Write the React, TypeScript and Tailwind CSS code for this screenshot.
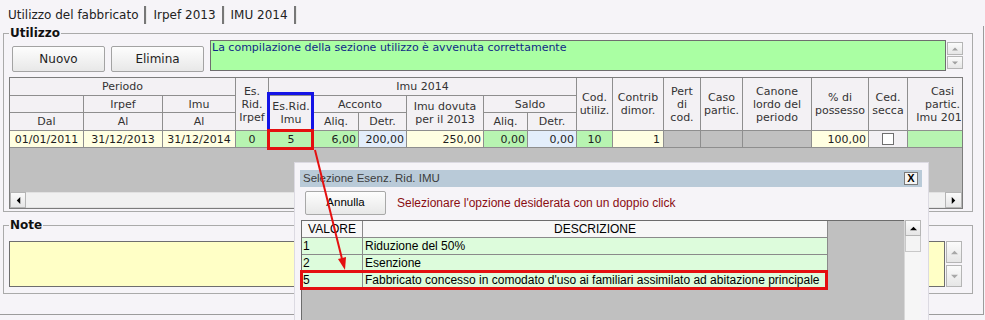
import type { ReactNode } from 'react'

const line = 'border-r border-b border-[#8e8e8e]'

function Th({ c, children }: { c: string; children?: ReactNode }) {
  return (
    <div className={`flex items-center justify-center text-center leading-[13px] bg-[#f3f1f4] text-[#333] ${line} ${c}`}>
      <span>{children}</span>
    </div>
  )
}

function Td({ c, children }: { c: string; children?: ReactNode }) {
  return <div className={`flex items-center leading-none text-[#1e1e1e] ${line} ${c}`}>{children}</div>
}

function Tri({ dir, color = '#000', size = 7 }: { dir: 'up' | 'down' | 'left' | 'right'; color?: string; size?: number }) {
  const pts = {
    up: '0,6 4,2 8,6',
    down: '0,2 4,6 8,2',
    left: '6,0 2,4 6,8',
    right: '2,0 6,4 2,8',
  }[dir]
  return (
    <svg width={size} height={size} viewBox="0 0 8 8">
      <polygon points={pts} fill={color} />
    </svg>
  )
}

function SmallBtn({ c, children }: { c: string; children: ReactNode }) {
  return (
    <div className={`flex items-center justify-center bg-linear-to-b from-[#fbfbfb] to-[#e6e6e6] border border-[#b5b5b5] ${c}`}>
      {children}
    </div>
  )
}

function Tabs() {
  const sep = <span className="mx-[6px] h-[18px] w-[3px] border-l-2 border-l-[#777] border-r border-r-[#e9e9e9]" />
  return (
    <div className="h-[24px] flex items-center pl-[8px] pt-[6px] text-[12px] text-[#222]">
      <span>Utilizzo del fabbricato</span>
      {sep}
      <span>Irpef 2013</span>
      {sep}
      <span>IMU 2014</span>
      {sep}
    </div>
  )
}

function UsageGrid() {
  return (
    <div className="mt-[5px] w-[954px] h-[132px] border border-[#7c7c7c] bg-[#c0c0c0] flex flex-col overflow-hidden text-[11px]">
      <div className="grid grid-cols-[74px_79px_73px_33px_45px_45px_48px_77px_44px_49px_36px_51px_37px_42px_69px_57px_39px_70px] grid-rows-[18px_17px_18px_17px]">
        <Th c="col-start-1 col-span-3 row-start-1">Periodo</Th>
        <Th c="col-start-1 row-start-2" />
        <Th c="col-start-2 row-start-2">Irpef</Th>
        <Th c="col-start-3 row-start-2">Imu</Th>
        <Th c="col-start-1 row-start-3">Dal</Th>
        <Th c="col-start-2 row-start-3">Al</Th>
        <Th c="col-start-3 row-start-3">Al</Th>
        <Th c="col-start-4 row-start-1 row-span-3">Es.<br />Rid.<br />Irpef</Th>
        <Th c="col-start-5 col-span-6 row-start-1">Imu 2014</Th>
        <Th c="col-start-5 row-start-2 row-span-2">Es.Rid.<br />Imu</Th>
        <Th c="col-start-6 col-span-2 row-start-2">Acconto</Th>
        <Th c="col-start-6 row-start-3">Aliq.</Th>
        <Th c="col-start-7 row-start-3">Detr.</Th>
        <Th c="col-start-8 row-start-2 row-span-2">Imu dovuta<br />per il 2013</Th>
        <Th c="col-start-9 col-span-2 row-start-2">Saldo</Th>
        <Th c="col-start-9 row-start-3">Aliq.</Th>
        <Th c="col-start-10 row-start-3">Detr.</Th>
        <Th c="col-start-11 row-start-1 row-span-3">Cod.<br />utiliz.</Th>
        <Th c="col-start-12 row-start-1 row-span-3">Contrib<br />dimor.</Th>
        <Th c="col-start-13 row-start-1 row-span-3">Pert<br />di<br />cod.</Th>
        <Th c="col-start-14 row-start-1 row-span-3">Caso<br />partic.</Th>
        <Th c="col-start-15 row-start-1 row-span-3">Canone<br />lordo del<br />periodo</Th>
        <Th c="col-start-16 row-start-1 row-span-3">% di<br />possesso</Th>
        <Th c="col-start-17 row-start-1 row-span-3">Ced.<br />secca</Th>
        <Th c="col-start-18 row-start-1 row-span-3">Casi<br />partic.<br />Imu 2013</Th>

        <Td c="col-start-1 row-start-4 bg-[#ffffe2] justify-center">01/01/2011</Td>
        <Td c="col-start-2 row-start-4 bg-[#ffffe2] justify-center">31/12/2013</Td>
        <Td c="col-start-3 row-start-4 bg-[#ffffe2] justify-center">31/12/2014</Td>
        <Td c="col-start-4 row-start-4 bg-[#b7f4b1] justify-center">0</Td>
        <Td c="col-start-5 row-start-4 bg-[#b7f4b1] justify-center">5</Td>
        <Td c="col-start-6 row-start-4 bg-[#b7f4b1] justify-end pr-[2px]">6,00</Td>
        <Td c="col-start-7 row-start-4 bg-[#e3eefb] justify-end pr-[2px]">200,00</Td>
        <Td c="col-start-8 row-start-4 bg-[#ffffe2] justify-end pr-[2px]">250,00</Td>
        <Td c="col-start-9 row-start-4 bg-[#b7f4b1] justify-end pr-[2px]">0,00</Td>
        <Td c="col-start-10 row-start-4 bg-[#e3eefb] justify-end pr-[2px]">0,00</Td>
        <Td c="col-start-11 row-start-4 bg-[#b7f4b1] justify-center">10</Td>
        <Td c="col-start-12 row-start-4 bg-[#ffffe2] justify-end pr-[3px]">1</Td>
        <Td c="col-start-13 row-start-4 bg-[#c0c0c0]" />
        <Td c="col-start-14 row-start-4 bg-[#c0c0c0]" />
        <Td c="col-start-15 row-start-4 bg-[#c0c0c0]" />
        <Td c="col-start-16 row-start-4 bg-[#ffffe2] justify-end pr-[2px]">100,00</Td>
        <Td c="col-start-17 row-start-4 bg-[#f2f0f3] justify-center">
          <span className="w-[12px] h-[12px] border border-[#6f6f6f] bg-white" />
        </Td>
        <Td c="col-start-18 row-start-4 bg-[#b7f4b1]" />
      </div>
      <div className="flex-1" />
      <div className="h-[16px] flex bg-[#f1f1f1]">
        <SmallBtn c="w-[16px] h-[16px]"><Tri dir="left" /></SmallBtn>
        <div className="flex-1 border-y border-[#e2e2e2]" />
        <SmallBtn c="w-[17px] h-[16px]"><Tri dir="right" /></SmallBtn>
      </div>
    </div>
  )
}

function Dialog() {
  const rows = [
    ['1', 'Riduzione del 50%'],
    ['2', 'Esenzione'],
    ['5', "Fabbricato concesso in comodato d'uso ai familiari assimilato ad abitazione principale"],
  ]
  return (
    <div className="absolute left-[294px] top-[162px] w-[635px] h-[170px] bg-[#f6f4f8] border border-[#dcdae2] pl-[5px] pt-[7px] font-['Liberation_Sans',sans-serif]">
      <div className="w-[622px] h-[17px] bg-[#b9cad8] flex items-center justify-between pl-[3px] pr-[4px]">
        <span className="text-[11.5px] text-[#3c3c3c]">Selezione Esenz. Rid. IMU</span>
        <span className="w-[14px] h-[13px] flex items-center justify-center bg-[#f4f4f4] border border-[#7a7a7a] text-[11px] font-bold leading-none text-black">X</span>
      </div>
      <div className="flex items-center mt-[4px] pl-[5px]">
        <button className="w-[81px] h-[24px] bg-linear-to-b from-[#fdfdfd] to-[#e8e8e8] border border-[#a8a8a8] rounded-[2px] text-[11.5px] text-black">
          Annulla
        </button>
        <span className="ml-[11px] text-[12px] text-[#8a0d12]">Selezionare l'opzione desiderata con un doppio click</span>
      </div>
      <div className="mt-[5px] ml-[1px] flex text-[12px] text-black">
        <div className="w-[603px] h-[110px] bg-[#c0c0c0] border-l border-t border-[#6c6c6c]">
          <div className="w-[526px]">
            <div className="flex h-[17px] bg-[#f7f7f7]">
              <div className="w-[61px] border-r border-b border-[#8a8a8a] flex items-center justify-center">VALORE</div>
              <div className="w-[465px] border-r border-b border-[#8a8a8a] flex items-center justify-center">DESCRIZIONE</div>
            </div>
            {rows.map(([v, d]) => (
              <div key={v} className="flex h-[17px] bg-[#ddfcdc]">
                <div className="w-[61px] border-r border-b border-[#8a8a8a] flex items-center pl-[1px]">{v}</div>
                <div className="w-[465px] border-r border-b border-[#8a8a8a] flex items-center pl-[2px] whitespace-nowrap">{d}</div>
              </div>
            ))}
          </div>
        </div>
        <div className="w-[17px] h-[110px] bg-[#f6f6f6] border-l border-[#d8d8d8] flex flex-col">
          <SmallBtn c="h-[16px]"><Tri dir="up" /></SmallBtn>
          <div className="h-[16px] border-x border-b border-[#c8c8c8] bg-[#f4f4f4]" />
        </div>
      </div>
    </div>
  )
}

export default function App() {
  return (
    <div className="relative w-[985px] h-[320px] overflow-hidden bg-[#f6f4f8] font-['DejaVu_Sans',sans-serif] text-[#1e1e1e]">
      <Tabs />
      <div className="w-[984px] h-[289px] border-r border-b border-[#9c9c9c] pl-[3px]">
        <fieldset className="mt-[2px] w-[970px] border border-[#aaaaaa] pl-[5px] pr-[9px] pb-[2px]">
          <legend className="px-[1px] text-[12px] leading-[14px] font-bold text-[#111]">Utilizzo</legend>
          <div className="flex items-start h-[32px]">
            <button className="mt-[6px] ml-[3px] w-[93px] h-[26px] bg-linear-to-b from-[#fdfdfd] to-[#e8e8e8] border border-[#a3a3a3] rounded-[2px] text-[12px]">
              Nuovo
            </button>
            <button className="mt-[6px] ml-[6px] w-[93px] h-[26px] bg-linear-to-b from-[#fdfdfd] to-[#e8e8e8] border border-[#a3a3a3] rounded-[2px] text-[12px]">
              Elimina
            </button>
            <div className="ml-[6px] w-[736px] h-[31px] bg-[#aaffa3] border border-[#6e6e6e] px-[1px] text-[11px] leading-[14px] text-[#0f2a86]">
              La compilazione della sezione utilizzo è avvenuta correttamente
            </div>
            <div className="ml-[1px] mt-[2px] flex flex-col gap-[1px]">
              <SmallBtn c="w-[16px] h-[13px]"><Tri dir="up" color="#a0a0a0" size={6} /></SmallBtn>
              <SmallBtn c="w-[16px] h-[13px]"><Tri dir="down" color="#a0a0a0" size={6} /></SmallBtn>
            </div>
          </div>
          <UsageGrid />
        </fieldset>

        <fieldset className="mt-[6px] w-[970px] border border-[#aaaaaa] pl-[5px] pr-[9px] pt-[9px] pb-[6px]">
          <legend className="px-[1px] text-[12px] leading-[14px] font-bold text-[#111]">Note</legend>
          <div className="flex items-start">
            <div className="w-[936px] h-[46px] bg-[#ffffc6] border border-[#6e6e6e]" />
            <div className="ml-[1px] flex flex-col gap-[2px]">
              <SmallBtn c="w-[16px] h-[22px]"><Tri dir="up" color="#a8a8a8" size={7} /></SmallBtn>
              <SmallBtn c="w-[16px] h-[22px]"><Tri dir="down" color="#a8a8a8" size={7} /></SmallBtn>
            </div>
          </div>
        </fieldset>
      </div>

      {/* annotations drawn over the grid */}
      <div className="absolute left-[267px] top-[92px] w-[47px] h-[40px] border-[3px] border-[#1414e6]" />
      <div className="absolute left-[267px] top-[129px] w-[47px] h-[21px] border-[3px] border-[#e41010]" />

      <Dialog />

      <div className="absolute left-[300px] top-[270px] w-[528px] h-[20px] border-[3px] border-[#e41010]" />
      <svg className="absolute left-0 top-0 pointer-events-none" width="985" height="320">
        <line x1="315" y1="150" x2="342" y2="259" stroke="#e41010" strokeWidth="2" />
        <polygon points="345,270 346,257 338,259" fill="#e41010" />
      </svg>
    </div>
  )
}
